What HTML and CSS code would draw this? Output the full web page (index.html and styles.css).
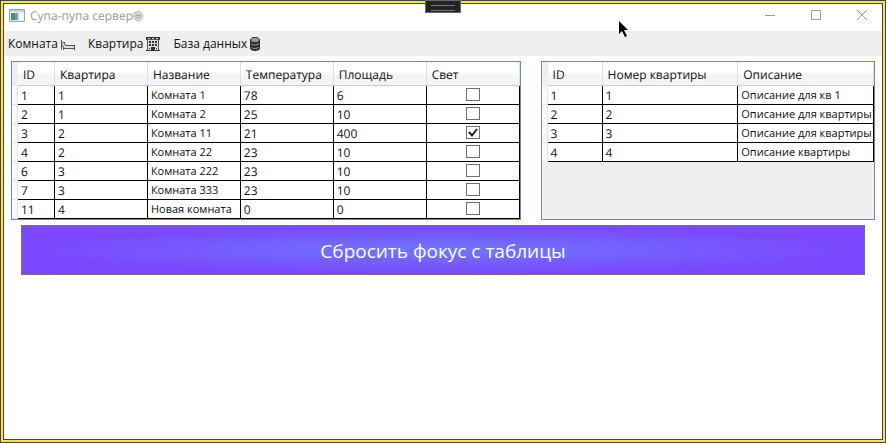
FILE: index.html
```html
<!DOCTYPE html>
<html lang="ru">
<head>
<meta charset="utf-8">
<title>Супа-пупа сервер</title>
<link rel="stylesheet" href="styles.css">
</head>
<body>
<div class="frame"><div class="window">
  <header class="titlebar">
    <svg class="app-icon" viewBox="0 0 16 14" aria-hidden="true"><path d="M.5.5h15v12H.5z" fill="#e9eef0" stroke="#9aa3a8"/><path d="M1 1h14v1.500H1z" fill="#c3cbd0"/><path d="M2 4h4v7H2z" fill="#3d9080"/><path d="M6 4h3v7H6z" fill="#6c9fc4"/><path d="M11 4h3v7h-3z" fill="#fff"/></svg>
    <h1 class="title">Супа-пупа сервер</h1>
    <svg class="swirl" viewBox="0 0 10 10" fill="none" stroke="#a5a5a5" aria-hidden="true"><circle cx="5" cy="5" r="4.400"/><circle cx="5" cy="5" r="2.500"/><path d="M3 4.500h4M3 6h4"/></svg>
    <div class="controls">
      <button class="control" aria-label="Свернуть"><svg viewBox="0 0 12 12"><path d="M1 5.500h10"/></svg></button>
      <button class="control" aria-label="Развернуть"><svg viewBox="0 0 12 12"><path d="M1.500 .5h9v9h-9z"/></svg></button>
      <button class="control" aria-label="Закрыть"><svg viewBox="0 0 12 12"><path d="M1 0l10 10M11 0L1 10"/></svg></button>
    </div>
  </header>
  <nav class="menu">
    <button class="item">Комната <svg viewBox="0 0 16 16" fill="none" aria-hidden="true"><path d="M2 6l3 3.500h9.500v3H3L1.500 10z" fill="#ddd"/><path d="M1.500 4v9.500M4.500 6v2.500M1 5.500l3.500 2 1 2h9.500M3 12.500h12M3.500 12v2M14.500 9v5M2 9l2 3" stroke="#555"/></svg></button>
    <button class="item">Квартира <svg viewBox="0 0 16 16" aria-hidden="true"><path d="M1 1h14v3H1z" fill="#333"/><path d="M2.500 3.500h11v11h-11z" fill="#ddd" stroke="#555"/><path d="M3 2h2v1H3zM7 2h2v1H7zM11 2h2v1h-2z" fill="#ccc"/><path d="M4 5h2v2H4zM7 5h2v2H7zM10 5h2v2h-2zM4 8h2v2H4zM7 8h2v2H7zM10 8h2v2h-2zM4 12h1v1H4zM11 12h1v1h-1zM6 11h4v4H6zM1 14h14v1H1z" fill="#333"/></svg></button>
    <button class="item">База данных <svg viewBox="0 0 16 16" aria-hidden="true"><path d="M1 4v8c0 4 10 4 10 0V4z" fill="#2b2b2b"/><ellipse cx="6" cy="4" rx="4.500" ry="2.500" fill="#999" stroke="#333"/><path d="M2 7.500c1 2 6 2 8 0M2 11c1 2 6 2 8 0" fill="none" stroke="#aaa"/></svg></button>
  </nav>
  <main>
    <div class="tables">
      <div class="grid rooms"><table>
        <colgroup><col class="c-head"><col class="c-id"><col><col><col><col><col></colgroup>
        <thead><tr><td></td><th>ID</th><th>Квартира</th><th>Название</th><th>Температура</th><th>Площадь</th><th>Свет</th></tr></thead>
        <tbody>
          <tr><td></td><td>1</td><td>1</td><td class="text">Комната 1</td><td>78</td><td>6</td><td class="check"><input type="checkbox" aria-label="Свет, Комната 1"></td></tr>
          <tr><td></td><td>2</td><td>1</td><td class="text">Комната 2</td><td>25</td><td>10</td><td class="check"><input type="checkbox" aria-label="Свет, Комната 2"></td></tr>
          <tr><td></td><td>3</td><td>2</td><td class="text">Комната 11</td><td>21</td><td>400</td><td class="check"><input type="checkbox" checked aria-label="Свет, Комната 11"></td></tr>
          <tr><td></td><td>4</td><td>2</td><td class="text">Комната 22</td><td>23</td><td>10</td><td class="check"><input type="checkbox" aria-label="Свет, Комната 22"></td></tr>
          <tr><td></td><td>6</td><td>3</td><td class="text">Комната 222</td><td>23</td><td>10</td><td class="check"><input type="checkbox" aria-label="Свет, Комната 222"></td></tr>
          <tr><td></td><td>7</td><td>3</td><td class="text">Комната 333</td><td>23</td><td>10</td><td class="check"><input type="checkbox" aria-label="Свет, Комната 333"></td></tr>
          <tr><td></td><td>11</td><td>4</td><td class="text">Новая комната</td><td>0</td><td>0</td><td class="check"><input type="checkbox" aria-label="Свет, Новая комната"></td></tr>
        </tbody>
      </table></div>
      <div class="grid flats"><table>
        <colgroup><col class="c-head"><col class="c-flat-id"><col><col></colgroup>
        <thead><tr><td></td><th>ID</th><th>Номер квартиры</th><th>Описание</th></tr></thead>
        <tbody>
          <tr><td></td><td>1</td><td>1</td><td class="text">Описание для кв 1</td></tr>
          <tr><td></td><td>2</td><td>2</td><td class="text">Описание для квартиры</td></tr>
          <tr><td></td><td>3</td><td>3</td><td class="text">Описание для квартиры</td></tr>
          <tr><td></td><td>4</td><td>4</td><td class="text">Описание квартиры</td></tr>
        </tbody>
      </table></div>
    </div>
    <button class="reset">Сбросить фокус с таблицы</button>
  </main>
</div></div>
<div class="grip"></div>
<svg class="cursor" viewBox="0 0 10 18" aria-hidden="true"><path d="M1 1v13l3-3 3 6 2-1-3-6h4z" fill="#000"/></svg>
</body>
</html>
```

FILE: styles.css
```css
* { box-sizing: border-box; }
body {
  margin: 0;
  font: 12px/16px "Open Sans", "Noto Sans", sans-serif;
  text-rendering: geometricPrecision;
  color: #111;
  background: #fff;
}
button { font: inherit; color: inherit; border: 0; background: none; padding: 0; }
.frame {
  min-height: 100vh;
  display: flex;
  border: 1px solid #444;
  background: #ffe340;
  padding: 2px;
}
.window { flex: 1; min-width: 0; border: 1px solid #444; background: #fff; }
.titlebar { display: flex; align-items: center; height: 27px; padding: 0 0 4px 5px; color: #999; }
.app-icon { width: 16px; height: 14px; }
.title { margin: 0 0 0 5px; font-size: 12px; font-weight: 400; }
.swirl { width: 10px; height: 10px; }
.controls { display: flex; margin-left: auto; margin-right: -3px; }
.control { width: 46px; height: 23px; display: grid; place-items: center; }
.control svg { width: 12px; height: 12px; fill: none; stroke: #999; }
.menu { display: flex; gap: 12px; height: 25px; padding-left: 4px; background: #efefef; }
.item { display: flex; align-items: center; gap: 2px; }
.item svg { width: 16px; height: 16px; }
main { padding: 5px 7px; }
.tables { display: flex; gap: 20px; }
.grid { border: 1px solid #688caf; background: #efefef; min-width: 0; }
.rooms { flex: 510; }
.flats { flex: 334; }
table { width: 100%; table-layout: fixed; border-spacing: 0; }
.c-head { width: 6px; }
.c-id { width: 37px; }
.c-flat-id { width: 55px; }
td, th { overflow: hidden; white-space: nowrap; text-align: left; font-weight: 400; }
thead th {
  height: 24px;
  padding: 2px 0 0 5px;
  background: linear-gradient(#fff 40%, #f3f4f6 60%);
  border-right: 1px solid #dedfe1;
  border-bottom: 1px solid #ccc;
}
thead td { background: #efefef; }
tbody td {
  height: 19px;
  padding: 2px 3px 0;
  background: #fff;
  border-right: 1px solid #000;
  border-bottom: 1px solid #000;
}
tbody .text { font-size: 11px; }
tbody td:first-child { padding: 0; background: #fafafa; border-color: #e5e5e5; }
tbody .check { padding: 2px 3px 3px; }
.check input {
  appearance: none;
  display: block;
  width: 14px;
  height: 13px;
  margin: 0 auto;
  border: 1px solid #707070;
  background: #fff;
}
.check input:checked {
  background: url("data:image/svg+xml,%3Csvg xmlns='http://www.w3.org/2000/svg' viewBox='0 0 12 11'%3E%3Cpath d='M2 5l3 3.500L10 2' fill='none' stroke='%23212121' stroke-width='2'/%3E%3C/svg%3E") center no-repeat;
}
.reset {
  display: block;
  width: calc(100% - 20px);
  height: 50px;
  margin: 5px 10px 0;
  padding-top: 2px;
  border: 1px solid #707070;
  background: radial-gradient(closest-side, #6e78ff, #7b47ff);
  color: #fff;
  font-size: 19px;
  line-height: 28px;
}
.grip {
  position: absolute;
  top: 0;
  left: 425px;
  width: 36px;
  height: 13px;
  padding: 4px 5px;
  border: 1px solid #686868;
  background: #222;
}
.grip::before { content: ""; display: block; height: 4px; border: solid #777; border-width: 1px 0; }
.cursor { position: absolute; left: 618px; top: 20px; width: 10px; height: 18px; }
```
